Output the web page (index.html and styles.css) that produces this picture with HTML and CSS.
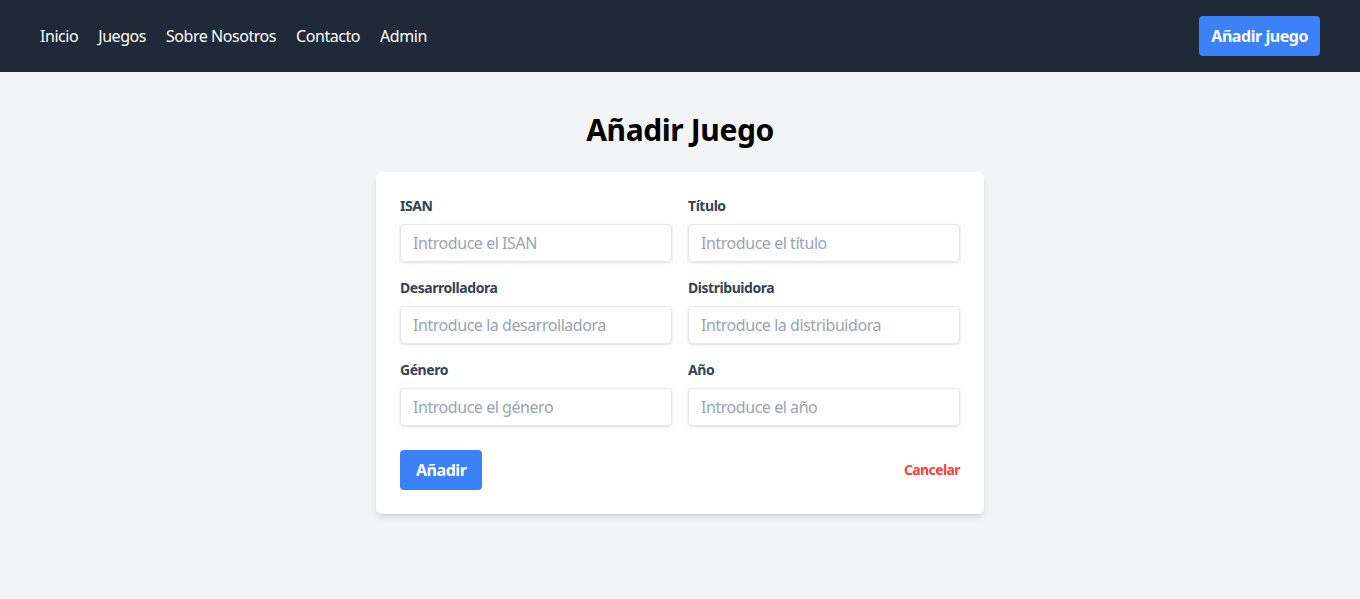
FILE: index.html
```html
<!DOCTYPE html>
<html lang="es">
<head>
<meta charset="utf-8">
<title>Añadir Juego</title>
<link rel="stylesheet" href="styles.css">
</head>
<body>
<nav class="navbar">
  <ul class="nav-links">
    <li><a href="#">Inicio</a></li>
    <li><a href="#">Juegos</a></li>
    <li><a href="#">Sobre Nosotros</a></li>
    <li><a href="#">Contacto</a></li>
    <li><a href="#">Admin</a></li>
  </ul>
  <a href="#" class="nav-button">Añadir juego</a>
</nav>
<main class="main">
  <h1 class="title">Añadir Juego</h1>
  <form class="card">
    <div class="grid">
      <div class="field">
        <label class="label">ISAN</label>
        <input class="input" type="text" placeholder="Introduce el ISAN">
      </div>
      <div class="field">
        <label class="label">Título</label>
        <input class="input" type="text" placeholder="Introduce el título">
      </div>
      <div class="field">
        <label class="label">Desarrolladora</label>
        <input class="input" type="text" placeholder="Introduce la desarrolladora">
      </div>
      <div class="field">
        <label class="label">Distribuidora</label>
        <input class="input" type="text" placeholder="Introduce la distribuidora">
      </div>
      <div class="field">
        <label class="label">Género</label>
        <input class="input" type="text" placeholder="Introduce el género">
      </div>
      <div class="field">
        <label class="label">Año</label>
        <input class="input" type="text" placeholder="Introduce el año">
      </div>
    </div>
    <div class="actions">
      <button type="button" class="btn-primary">Añadir</button>
      <a href="#" class="cancel">Cancelar</a>
    </div>
  </form>
</main>
</body>
</html>
```
FILE: styles.css
```css
* { box-sizing: border-box; }
html, body { margin: 0; padding: 0; }
body {
  font-family: "Noto Sans", "Open Sans", sans-serif;
  letter-spacing: -0.45px;
  background: #f3f4f6;
  color: #111827;
  min-height: 599px;
}
.navbar {
  height: 72px;
  background: #1f2937;
  display: flex;
  align-items: center;
  justify-content: space-between;
  padding: 0 40px;
}
.nav-links {
  list-style: none;
  margin: 0;
  padding: 0;
  display: flex;
  gap: 20px;
}
.nav-links a {
  color: #ffffff;
  text-decoration: none;
  font-size: 16px;
  line-height: 24px;
}
.nav-button {
  background: #3b82f6;
  color: #fff;
  font-weight: 700;
  font-size: 16px;
  line-height: 24px;
  padding: 8px 12px;
  border-radius: 4px;
  text-decoration: none;
}
.main {
  padding-top: 40px;
  display: flex;
  flex-direction: column;
  align-items: center;
}
.title {
  margin: 0 0 24px;
  font-size: 30px;
  line-height: 36px;
  font-weight: 700;
  color: #000;
  letter-spacing: -0.4px;
}
.card {
  width: 608px;
  background: #fff;
  border-radius: 6px;
  padding: 24px;
  box-shadow: 0 4px 6px -1px rgba(0,0,0,0.1), 0 2px 4px -2px rgba(0,0,0,0.1);
}
.grid {
  display: grid;
  grid-template-columns: 1fr 1fr;
  column-gap: 16px;
  row-gap: 16px;
}
.field { display: flex; flex-direction: column; }
.label {
  font-size: 14px;
  line-height: 20px;
  font-weight: 700;
  color: #374151;
  margin-bottom: 8px;
}
.input {
  height: 38px;
  border: 1px solid #e5e7eb;
  border-radius: 4px;
  padding: 8px 12px;
  font-family: inherit;
  letter-spacing: inherit;
  font-size: 16px;
  line-height: 20px;
  color: #374151;
  box-shadow: 0 1px 3px 0 rgba(0,0,0,0.1), 0 1px 2px -1px rgba(0,0,0,0.1);
  outline: none;
}
.input::placeholder { color: #9ca3af; }
.actions {
  margin-top: 24px;
  display: flex;
  align-items: center;
  justify-content: space-between;
}
.btn-primary {
  background: #3b82f6;
  color: #fff;
  border: none;
  border-radius: 4px;
  font-family: inherit;
  letter-spacing: inherit;
  font-weight: 700;
  font-size: 16px;
  line-height: 24px;
  padding: 8px 16px;
  cursor: pointer;
}
.cancel {
  color: #ef4444;
  font-weight: 700;
  font-size: 14px;
  line-height: 20px;
  letter-spacing: -0.6px;
  text-decoration: none;
}
```
